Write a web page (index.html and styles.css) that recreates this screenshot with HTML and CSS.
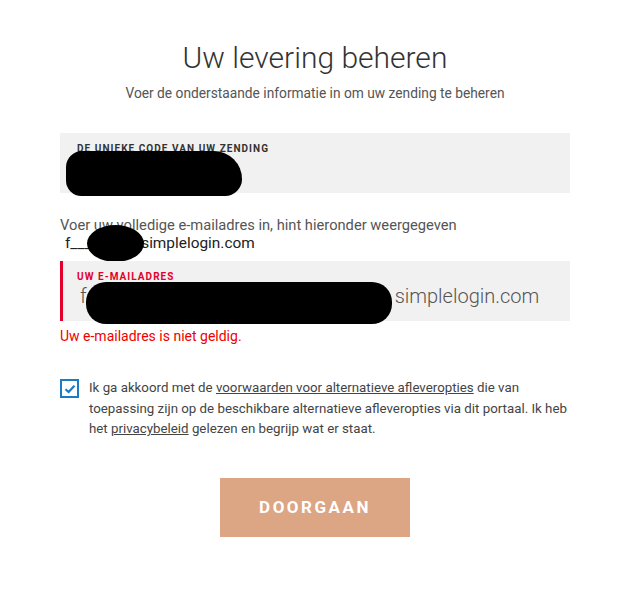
FILE: index.html
```html
<!DOCTYPE html>
<html lang="nl">
<head>
  <meta charset="UTF-8" />
  <meta name="viewport" content="width=device-width, initial-scale=1.0" />
  <title>Uw levering beheren</title>
  <link rel="stylesheet" href="styles.css">
</head>
<body>
  <div class="page">
    <h1>Uw levering beheren</h1>
    <p class="intro">Voer de onderstaande informatie in om uw zending te beheren</p>

    <div class="field">
      <label>De unieke code van uw zending</label>
      <div class="value">&nbsp;</div>
      <span class="redact redact-code"></span>
    </div>

    <div class="hint">
      <p>Voer uw volledige e-mailadres in, hint hieronder weergegeven</p>
      <p class="hint-mail">f___<span class="hint-gap"></span>simplelogin.com</p>
      <span class="redact redact-hint"></span>
    </div>

    <div class="field invalid">
      <label>Uw e-mailadres</label>
      <div class="value">f<span class="gap"></span>simplelogin.com</div>
      <span class="redact redact-mail"></span>
    </div>
    <div class="error">Uw e-mailadres is niet geldig.</div>

    <div class="agree">
      <span class="checkbox">
        <svg width="12" height="10" viewBox="0 0 12 10"><path d="M1.5 5.2 L4.6 8 L10.5 1.8" fill="none" stroke="#1b7bc4" stroke-width="2.2"/></svg>
      </span>
      <p>Ik ga akkoord met de <a href="#">voorwaarden voor alternatieve afleveropties</a> die van toepassing zijn op de beschikbare alternatieve afleveropties via dit portaal. Ik heb het <a href="#">privacybeleid</a> gelezen en begrijp wat er staat.</p>
    </div>

    <div class="actions">
      <button class="submit">Doorgaan</button>
    </div>
  </div>
</body>
</html>
```

FILE: styles.css
```css
body {
  margin: 0;
  font-family: Roboto, 'Liberation Sans', sans-serif;
  background: #fff;
  color: #333;
}
.page {
  width: 510px;
  margin-left: 60px;
  padding-top: 38px;
}
h1 {
  margin: 0;
  text-align: center;
  font-weight: 300;
  font-size: 30px;
  line-height: 40px;
  color: #333;
}
.intro {
  margin: 5px 0 0;
  text-align: center;
  font-size: 13.75px;
  line-height: 20px;
  color: #555;
}
.field {
  position: relative;
  background: #f1f1f1;
  height: 60px;
  box-sizing: border-box;
  padding: 10px 17px 0;
  margin-top: 30px;
}
.field label {
  display: block;
  font-size: 10px;
  font-weight: 700;
  letter-spacing: 1.05px;
  text-transform: uppercase;
  color: #333;
  line-height: 12px;
}
.field .value {
  font-size: 20px;
  font-weight: 300;
  color: #555;
  line-height: 26px;
}
.field.invalid {
  border-left: 3px solid #e4002b;
  padding-left: 14px;
  margin-top: 0;
}
.field.invalid label {
  color: #e4002b;
}
.field.invalid .value {
  padding-left: 3px;
}
.gap {
  display: inline-block;
  width: 308px;
}
.hint {
  position: relative;
  margin-top: 23px;
  padding-bottom: 9px;
  line-height: 18px;
}
.hint p {
  margin: 0;
  font-size: 14.7px;
  color: #555;
}
.hint .hint-mail {
  padding-left: 5px;
  font-size: 15.4px;
  color: #222;
}
.hint-gap {
  display: inline-block;
  width: 50px;
}
.redact {
  position: absolute;
  background: #000;
}
.redact-code {
  left: 6px;
  top: 18px;
  width: 176px;
  height: 45px;
  border-radius: 23px 40px 24px 22px;
}
.redact-hint {
  left: 27px;
  top: 9px;
  width: 57px;
  height: 37px;
  border-radius: 50%;
}
.redact-mail {
  left: 23px;
  top: 21px;
  width: 306px;
  height: 42px;
  border-radius: 20px;
}
.error {
  margin-top: 5px;
  font-size: 14px;
  line-height: 20px;
  color: #f00000;
}
.agree {
  display: flex;
  align-items: flex-start;
  gap: 10px;
  margin-top: 32px;
}
.checkbox {
  flex: none;
  width: 19px;
  height: 19px;
  box-sizing: border-box;
  border: 2px solid #1b7bc4;
  display: flex;
  align-items: center;
  justify-content: center;
  margin-top: 1px;
}
.agree p {
  margin: 0;
  font-size: 13.3px;
  line-height: 20.5px;
  color: #444;
}
.agree a {
  color: #444;
  text-decoration: underline;
}
.actions {
  display: flex;
  justify-content: center;
  margin-top: 38px;
}
.submit {
  width: 190px;
  height: 59px;
  border: none;
  background: #dca584;
  color: #fff;
  font-family: Roboto, 'Liberation Sans', sans-serif;
  font-size: 17px;
  font-weight: 700;
  letter-spacing: 2.5px;
  text-transform: uppercase;
  cursor: pointer;
}
```
